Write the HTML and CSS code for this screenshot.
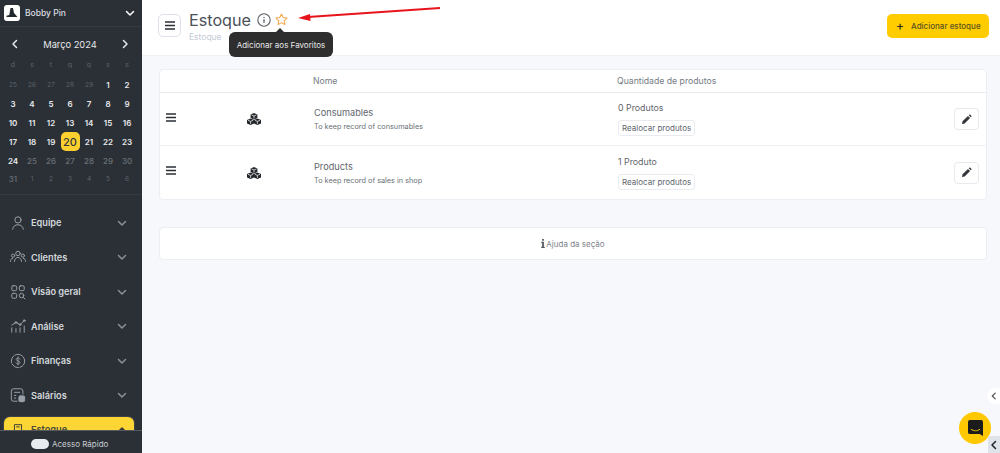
FILE: index.html
```html
<!DOCTYPE html>
<html lang="pt-BR">

<head>
    <meta charset="UTF-8">
    <title>Estoque</title>
    <link rel="stylesheet" href="styles.css">
</head>

<body>
    <svg class="defs">
        <defs>
            <symbol id="chev" viewBox="0 0 12 12">
                <path d="M2.5 4.5 6 8l3.5-3.500" fill="none" stroke="currentColor" stroke-width="1.500" stroke-linecap="round" stroke-linejoin="round" />
            </symbol>
            <symbol id="burger" viewBox="0 0 10 9">
                <path d="M.5 1h9M.5 4.500h9M.5 8h9" fill="none" stroke="currentColor" stroke-width="1.600" stroke-linecap="round" />
            </symbol>
            <symbol id="cubes" viewBox="0 0 14 12">
                <path d="M7 0l3.400 1.500v3.400L7 6.400 3.600 4.900V1.500z" fill="#23272b" />
                <path d="M3.600 5.400 7 6.900v3.500L3.600 12 0 10.400V6.900z" fill="#23272b" />
                <path d="M10.400 5.400 14 6.900v3.500L10.400 12 7 10.400V6.900z" fill="#23272b" />
                <path d="M4.500 1.900 7 3l2.500-1.100M7 3v2.500M1 7.300l2.600 1.100 2.500-1.100M3.600 8.400v2.600M7.900 7.300l2.500 1.100L13 7.300M10.400 8.400v2.600" fill="none" stroke="#fff" stroke-width=".7" />
            </symbol>
            <symbol id="pencil" viewBox="0 0 12 12">
                <path d="M1 11l.7-3L7.600 2.100l2.300 2.300L4 10.300zM8.400 1.300l.7-.6c.3-.3.7-.3 1 0l1.200 1.200c.3.3.3.700 0 1l-.6.700z" fill="#33373b" />
            </symbol>
        </defs>
    </svg>

    <aside class="sidebar">
        <div class="account">
            <span class="logo">
                <svg width="16" height="16" viewBox="0 0 16 16">
                    <path d="M6.500 3h2.500l1 5 3.500 4H2.500v-1.200l2.800-.8z" fill="#23282d" />
                </svg>
            </span>
            <span class="account-name">Bobby Pin</span>
            <svg class="account-chev" width="12" height="12"><use href="#chev" /></svg>
        </div>

        <div class="calendar">
            <div class="cal-head">
                <svg class="cal-prev" width="12" height="12"><use href="#chev" /></svg>
                <span>Março 2024</span>
                <svg class="cal-next" width="12" height="12"><use href="#chev" /></svg>
            </div>
            <div class="cal-grid cal-week">
                <span>d</span><span>s</span><span>t</span><span>q</span><span>q</span><span>s</span><span>s</span>
            </div>
            <div class="cal-grid">
                <span class="out small">25</span><span class="out small">26</span><span class="out small">27</span><span class="out small">28</span><span class="out small">29</span><span>1</span><span>2</span>
                <span>3</span><span>4</span><span>5</span><span>6</span><span>7</span><span>8</span><span>9</span>
                <span>10</span><span>11</span><span>12</span><span>13</span><span>14</span><span>15</span><span>16</span>
                <span>17</span><span>18</span><span>19</span><span class="today">20</span><span>21</span><span>22</span><span>23</span>
                <span>24</span><span class="out">25</span><span class="out">26</span><span class="out">27</span><span class="out">28</span><span class="out">29</span><span class="out">30</span>
                <span class="out">31</span><span class="out small">1</span><span class="out small">2</span><span class="out small">3</span><span class="out small">4</span><span class="out small">5</span><span class="out small">6</span>
            </div>
        </div>

        <nav class="menu">
            <a class="menu-item">
                <svg class="menu-icon" viewBox="0 0 18 18"><circle cx="9" cy="5.500" r="3.500" /><path d="M3 16c.5-3.500 2.800-5 6-5s5.500 1.500 6 5" /></svg>
                <span>Equipe</span>
                <svg class="menu-chev" width="12" height="12"><use href="#chev" /></svg>
            </a>
            <a class="menu-item">
                <svg class="menu-icon" viewBox="0 0 18 18"><circle cx="9" cy="5" r="2.500" /><circle cx="3.500" cy="7.500" r="1.800" /><circle cx="14.500" cy="7.500" r="1.800" /><path d="M5 14c.3-3 1.800-4.500 4-4.500s3.700 1.500 4 4.500M.5 14c0-2 .8-3.500 2.500-3.500M17.500 14c0-2-.8-3.500-2.500-3.500" /></svg>
                <span>Clientes</span>
                <svg class="menu-chev" width="12" height="12"><use href="#chev" /></svg>
            </a>
            <a class="menu-item">
                <svg class="menu-icon" viewBox="0 0 18 18"><rect x="2" y="2" width="5.500" height="5.500" rx="1.500" /><rect x="10.500" y="2" width="5.500" height="5.500" rx="1.500" /><rect x="2" y="10.500" width="5.500" height="5.500" rx="1.500" /><circle cx="13" cy="13" r="2.500" /><path d="M15 15l1.800 1.800" /></svg>
                <span>Visão geral</span>
                <svg class="menu-chev" width="12" height="12"><use href="#chev" /></svg>
            </a>
            <a class="menu-item">
                <svg class="menu-icon" viewBox="0 0 18 18"><path d="M2 16v-5M6.700 16v-4M11.300 16v-5M16 16V9M2 8l4.700-3 4.600 2.500L16 3" /><circle cx="6.700" cy="5" r="1" /><circle cx="11.300" cy="7.500" r="1" /><circle cx="16" cy="3" r="1" /></svg>
                <span>Análise</span>
                <svg class="menu-chev" width="12" height="12"><use href="#chev" /></svg>
            </a>
            <a class="menu-item">
                <svg class="menu-icon" viewBox="0 0 18 18"><circle cx="9" cy="9" r="7.500" stroke-dasharray="9 1.500" /><path d="M11 6.800C10.500 6 9.800 5.700 9 5.700c-1.200 0-2 .6-2 1.600 0 2.200 4.200 1.200 4.200 3.400 0 1-.9 1.600-2.200 1.600-.9 0-1.700-.4-2.200-1.100M9 4.500v9" stroke-width="1" /></svg>
                <span>Finanças</span>
                <svg class="menu-chev" width="12" height="12"><use href="#chev" /></svg>
            </a>
            <a class="menu-item">
                <svg class="menu-icon" viewBox="0 0 18 18"><path d="M8 16H4a2.500 2.500 0 0 1-2.500-2.500v-9A2.500 2.500 0 0 1 4 2h8a2.500 2.500 0 0 1 2.500 2.500V8M5 6h6M5 9.500h1.500M5 12.500h1.500" /><rect x="10" y="10" width="6.500" height="6.500" rx="1.500" fill="#99a0a8" /></svg>
                <span>Salários</span>
                <svg class="menu-chev" width="12" height="12"><use href="#chev" /></svg>
            </a>
            <a class="menu-item active">
                <svg class="menu-icon" viewBox="0 0 18 18"><path d="M5 9V3h8v6M2.500 12.500h13M7.500 5.500h3" /></svg>
                <span>Estoque</span>
                <svg class="menu-chev up" width="12" height="12"><use href="#chev" /></svg>
            </a>
        </nav>

        <div class="quick">
            <span class="toggle"></span>
            <span>Acesso Rápido</span>
        </div>
    </aside>

    <main class="content">
        <header class="topbar">
            <button class="burger-btn"><svg width="10" height="9"><use href="#burger" /></svg></button>
            <div class="title-block">
                <div class="title-row">
                    <h1>Estoque</h1>
                    <svg class="info" width="14" height="14" viewBox="0 0 14 14">
                        <circle cx="7" cy="7" r="6.200" fill="none" stroke="#565d65" stroke-width="1.100" />
                        <path d="M7 6.300v3.400M7 4.100v1" stroke="#565d65" stroke-width="1.300" />
                    </svg>
                    <svg class="star" width="13" height="13" viewBox="0 0 14 14">
                        <path d="M7 1l1.800 3.900 4.200.5-3.100 2.900.8 4.200L7 10.400l-3.700 2.100.8-4.200L1 5.400l4.200-.5z" fill="none" stroke="#f5a54a" stroke-width="1.100" stroke-linejoin="round" />
                    </svg>
                </div>
                <div class="crumb">Estoque</div>
            </div>
            <button class="add-btn"><span class="plus">+</span>Adicionar estoque</button>
        </header>

        <section class="card stock">
            <div class="stock-row stock-head">
                <span></span>
                <span></span>
                <span class="head-name">Nome</span>
                <span class="head-qty">Quantidade de produtos</span>
                <span></span>
            </div>
            <div class="stock-row">
                <svg class="drag" width="10" height="9"><use href="#burger" /></svg>
                <svg class="cubes" width="14" height="12"><use href="#cubes" /></svg>
                <div>
                    <div class="item-name">Consumables</div>
                    <div class="item-desc">To keep record of consumables</div>
                </div>
                <div>
                    <div class="item-qty">0 Produtos</div>
                    <span class="tag">Realocar produtos</span>
                </div>
                <button class="edit-btn"><svg width="11" height="11"><use href="#pencil" /></svg></button>
            </div>
            <div class="stock-row">
                <svg class="drag" width="10" height="9"><use href="#burger" /></svg>
                <svg class="cubes" width="14" height="12"><use href="#cubes" /></svg>
                <div>
                    <div class="item-name">Products</div>
                    <div class="item-desc">To keep record of sales in shop</div>
                </div>
                <div>
                    <div class="item-qty">1 Produto</div>
                    <span class="tag">Realocar produtos</span>
                </div>
                <button class="edit-btn"><svg width="11" height="11"><use href="#pencil" /></svg></button>
            </div>
        </section>

        <section class="card help">
            <svg width="4" height="9" viewBox="0 0 4 10"><path d="M1 0h2v2H1zM0 3h3v5.500h1V10H0V8.500h1V4.500H0z" fill="#555b62" /></svg>
            <span>Ajuda da seção</span>
        </section>

        <div class="tooltip">Adicionar aos Favoritos</div>

        <svg class="arrow" width="143" height="16" viewBox="0 0 143 16">
            <path d="M142 1 10 10" stroke="#e8141c" stroke-width="1.800" />
            <path d="M0 11 12 7l.5 7z" fill="#e8141c" />
        </svg>

        <span class="side-tab"><svg width="10" height="10"><use href="#chev" /></svg></span>
        <span class="chat">
            <svg width="15" height="16" viewBox="0 0 16 17">
                <path d="M2 0h12a2 2 0 0 1 2 2v15l-3.500-2H2a2 2 0 0 1-2-2V2a2 2 0 0 1 2-2z" fill="#1b1b1b" />
                <path d="M3.500 10c2.800 2 6.200 2 9 0" fill="none" stroke="#ffc800" stroke-width="1" stroke-linecap="round" />
            </svg>
        </span>
        <span class="corner-tab"><svg width="12" height="12"><use href="#chev" /></svg></span>
    </main>
</body>

</html>
```

FILE: styles.css
```css
* {
    box-sizing: border-box;
    margin: 0;
    padding: 0;
}

html,
body {
    height: 453px;
    overflow: hidden;
}

body {
    display: flex;
    font-family: Inter, "Liberation Sans", sans-serif;
    background: #f7f8fb;
    color: #4b5158;
}

.defs {
    position: absolute;
    width: 0;
    height: 0;
}

/* sidebar */
.sidebar {
    width: 142px;
    height: 453px;
    flex: none;
    display: flex;
    flex-direction: column;
    background: #2b3036;
    color: #d9dde1;
    overflow: hidden;
}

.account {
    height: 27px;
    flex: none;
    display: flex;
    align-items: center;
    padding: 0 6px 0 4px;
    gap: 5px;
    border-bottom: 1px solid #363b41;
    font-size: 8.500px;
    font-weight: 500;
}

.logo {
    width: 16px;
    height: 16px;
    background: #fff;
    border-radius: 3px;
    display: block;
}

.logo svg {
    display: block;
}

.account-name {
    flex: 1;
}

.account-chev {
    color: #fff;
}

.calendar {
    height: 168px;
    flex: none;
    padding: 10px 3px 0 3.500px;
    border-bottom: 1px solid #363b41;
}

.cal-head {
    display: flex;
    align-items: center;
    justify-content: space-between;
    height: 14px;
    padding: 0 8px 0 5.500px;
    font-size: 9.300px;
    color: #e6e8eb;
}

.cal-prev {
    transform: rotate(90deg);
}

.cal-next {
    transform: rotate(-90deg);
}

.cal-grid {
    display: grid;
    grid-template-columns: repeat(7, 19px);
    grid-auto-rows: 18.800px;
    text-align: center;
    font-size: 8px;
    font-weight: 600;
    color: #e8eaed;
}

.cal-grid span {
    display: flex;
    align-items: center;
    justify-content: center;
}

.cal-week {
    margin-top: 6px;
    grid-auto-rows: 15px;
    margin-bottom: 4px;
    font-size: 7px;
    font-weight: 400;
    color: #5c636a;
}

.cal-grid .out {
    color: #6a7077;
    font-weight: 500;
}

.cal-grid .small {
    font-size: 6.500px;
    font-weight: 400;
    color: #5c636a;
}

.cal-grid .today {
    background: #fdd02f;
    color: #33363a;
    border-radius: 5px;
    font-size: 11px;
    font-weight: 500;
}

.menu {
    flex: 1;
    min-height: 0;
    padding: 10.500px 8px 0 4px;
    overflow: hidden;
}

.menu-item {
    height: 34.500px;
    display: flex;
    align-items: center;
    padding: 0 6px;
    font-size: 9.200px;
    font-weight: 600;
    color: #d3d7db;
}

.menu-item span {
    flex: 1;
    margin-left: 5px;
}

.menu-icon {
    width: 16px;
    height: 16px;
    fill: none;
    stroke: #99a0a8;
    stroke-width: 1.100;
    stroke-linecap: round;
    stroke-linejoin: round;
}

.menu-chev {
    color: #8a9098;
}

.menu-item.active {
    background: #fdd535;
    border-radius: 6px;
    color: #4a4a3c;
    height: 25px;
    margin-top: 4.500px;
    box-shadow: 0 0 0 1px #3c4248;
}

.menu-item.active .menu-icon {
    stroke: #3c3d3a;
}

.menu-chev.up {
    transform: rotate(180deg);
    color: #3c3d3a;
}

.quick {
    height: 23px;
    flex: none;
    display: flex;
    align-items: center;
    justify-content: flex-start;
    gap: 3px;
    padding: 4px 0 0 31px;
    background: #2b3036;
    border-top: 1px solid #565b60;
    font-size: 8px;
    color: #c9cdd1;
}

.toggle {
    width: 18px;
    height: 10px;
    border-radius: 5px;
    background: #e9ecef;
    display: block;
}

/* main area */
.content {
    flex: 1;
    min-width: 0;
    position: relative;
}

.topbar {
    height: 56px;
    display: flex;
    align-items: flex-start;
    padding: 10px 11px 0 16px;
    background: #fff;
    border-bottom: 1px solid #eff0f4;
}

.burger-btn {
    width: 23px;
    height: 23px;
    margin-top: 4px;
    background: #fff;
    border: 1px solid #dfe2ea;
    border-radius: 5px;
    color: #2b2f34;
    display: flex;
    align-items: center;
    justify-content: center;
}

.title-block {
    flex: 1;
    margin-left: 8px;
}

.title-row {
    display: flex;
    align-items: center;
    height: 19px;
}

h1 {
    font-size: 16.200px;
    font-weight: 400;
    color: #4a5159;
}

.info {
    margin-left: 6px;
}

.star {
    margin-left: 4px;
}

.crumb {
    margin-top: 3px;
    font-size: 8.500px;
    color: #c6cbd6;
}

.add-btn {
    width: 102px;
    height: 24px;
    margin-top: 4px;
    display: flex;
    align-items: center;
    padding-left: 9px;
    background: #ffcc00;
    border: none;
    border-radius: 5px;
    font-family: inherit;
    font-size: 8px;
    font-weight: 500;
    color: #5a5320;
}

.plus {
    font-size: 12px;
    color: #2b2b20;
    margin-right: 7px;
    line-height: 1;
}

.card {
    margin-left: 17px;
    width: 828px;
    background: #fff;
    border: 1px solid #eceef3;
    border-radius: 4px;
}

.stock {
    margin-top: 13px;
}

.stock-row {
    display: grid;
    grid-template-columns: 75px 73px 304px 1fr 25px;
    align-items: center;
    height: 53px;
    padding: 0 7px 0 6px;
    border-bottom: 1px solid #f0f1f5;
}

.stock-row:last-child {
    border-bottom: none;
}

.stock-head {
    height: 23px;
    font-size: 8.700px;
    font-weight: 400;
    color: #757b83;
    border-bottom: 1px solid #e8eaef;
}

.head-qty {
    margin-left: -1px;
}

.head-name {
    margin-left: -1px;
}

.drag {
    color: #2b2f34;
    margin-top: -4px;
}

.cubes {
    margin-left: 6px;
}

.item-name {
    font-size: 9.200px;
    color: #5f656c;
}

.item-desc {
    margin-top: 4px;
    font-size: 7.300px;
    color: #6a7077;
}

.item-qty {
    font-size: 8.800px;
    color: #5f656c;
}

.tag {
    display: inline-block;
    margin-top: 7px;
    padding: 2px 3px;
    font-size: 8px;
    color: #5f656c;
    border: 1px solid #e9ebf0;
    border-radius: 3px;
}

.edit-btn {
    width: 25px;
    height: 22px;
    background: #fff;
    border: 1px solid #e7e9ee;
    border-radius: 4px;
    display: flex;
    align-items: center;
    justify-content: center;
}

.help {
    margin-top: 27px;
    height: 33px;
    display: flex;
    align-items: center;
    justify-content: center;
    gap: 1px;
    font-size: 8px;
    color: #7d8389;
}

/* things that sit over the page */
.tooltip {
    position: absolute;
    left: 87px;
    top: 32px;
    width: 104px;
    height: 25px;
    background: #2e2e2e;
    border-radius: 6px;
    color: #e8e8e8;
    font-size: 8px;
    display: flex;
    align-items: center;
    justify-content: center;
}

.tooltip::before {
    content: "";
    position: absolute;
    left: 47px;
    top: -4px;
    border-left: 4px solid transparent;
    border-right: 4px solid transparent;
    border-bottom: 4px solid #2e2e2e;
}

.arrow {
    position: absolute;
    left: 156px;
    top: 7px;
}

.side-tab {
    position: absolute;
    right: 0;
    top: 388px;
    width: 13px;
    height: 16px;
    background: #fff;
    border-radius: 8px 0 0 8px;
    color: #555;
    display: flex;
    align-items: center;
    justify-content: center;
}

.side-tab svg {
    transform: rotate(90deg);
}

.chat {
    position: absolute;
    left: 817px;
    top: 412px;
    width: 32px;
    height: 32px;
    border-radius: 50%;
    background: #ffc800;
    display: flex;
    align-items: center;
    justify-content: center;
}

.corner-tab {
    position: absolute;
    right: 0;
    top: 436px;
    width: 12px;
    height: 17px;
    background: #dfe3ea;
    color: #1f2328;
    display: flex;
    align-items: center;
    justify-content: center;
}

.corner-tab svg {
    transform: rotate(90deg);
}
```
